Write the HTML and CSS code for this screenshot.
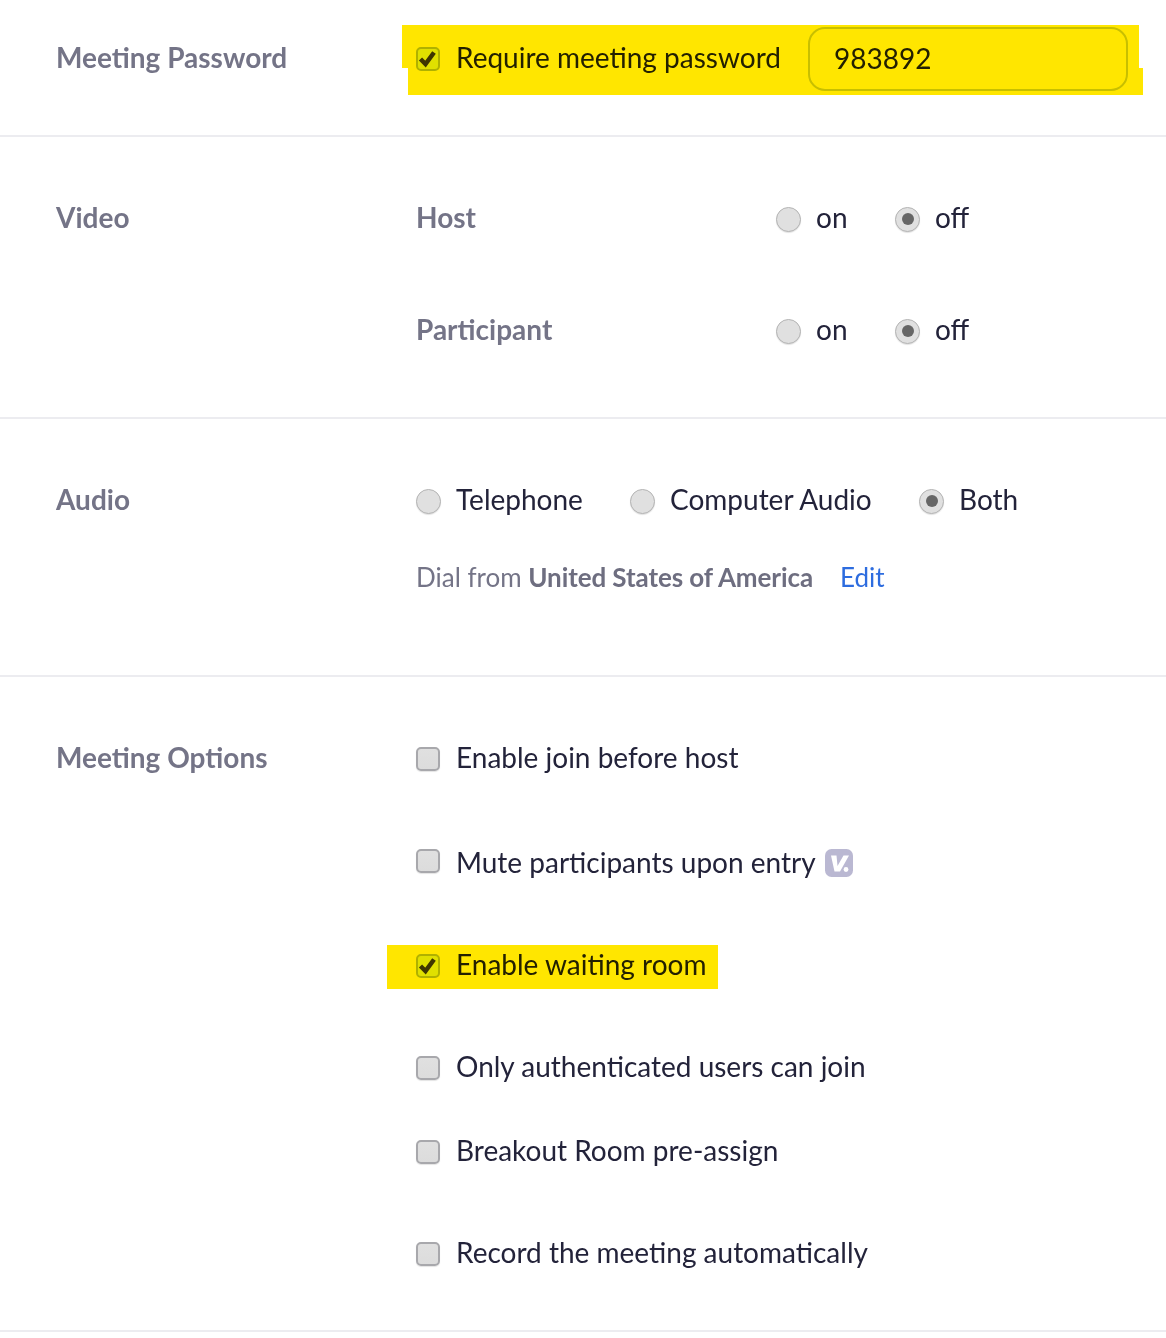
FILE: index.html
```html
<!DOCTYPE html>
<html lang="en">
<head>
<meta charset="utf-8">
<title>Meeting settings</title>
<link rel="stylesheet" href="styles.css">
</head>
<body>
<main class="page">
  <section class="section s-password">
    <h2 class="label">Meeting Password</h2>
    <div class="content">
      <div class="row">
        <span class="check on"><svg class="tick" viewBox="0 0 20 20"><path d="M2.500 10 7.500 15 16 3.500" /></svg></span>
        <span class="text">Require meeting password</span>
        <span class="input">983892</span>
      </div>
    </div>
  </section>
  <section class="section s-video">
    <h2 class="label">Video</h2>
    <div class="content">
      <div class="row">
        <span class="sub sub-fixed">Host</span>
        <span class="radio"></span><span class="text t-on">on</span>
        <span class="radio selected"></span><span class="text">off</span>
      </div>
      <div class="row mt-72">
        <span class="sub sub-fixed">Participant</span>
        <span class="radio"></span><span class="text t-on">on</span>
        <span class="radio selected"></span><span class="text">off</span>
      </div>
    </div>
  </section>
  <section class="section s-audio">
    <h2 class="label">Audio</h2>
    <div class="content">
      <div class="row">
        <span class="radio"></span><span class="text t-tel">Telephone</span>
        <span class="radio"></span><span class="text t-comp">Computer Audio</span>
        <span class="radio selected"></span><span class="text">Both</span>
      </div>
      <div class="row mt-38 dial">
        <span>Dial from <b>United States of America</b></span>
        <a class="edit" href="#">Edit</a>
      </div>
    </div>
  </section>
  <section class="section s-options">
    <h2 class="label">Meeting Options</h2>
    <div class="content">
      <div class="row"><span class="check"></span><span class="text">Enable join before host</span></div>
      <div class="row mt-65">
        <span class="check raised"></span><span class="text">Mute participants upon entry</span>
        <svg class="badge" viewBox="0 0 28 28"><rect width="28" height="28" rx="6.5" fill="#bab8d2"/><path d="M6 6.500h5.500l1 10.500L18.500 6.500H24L15 22.500H9.500z" fill="#fff"/><circle cx="21" cy="20.500" r="2.400" fill="#fff"/></svg>
      </div>
      <div class="row mt-62">
        <span class="check on"><svg class="tick" viewBox="0 0 20 20"><path d="M2.500 10 7.500 15 16 3.500" /></svg></span>
        <span class="text">Enable waiting room</span>
      </div>
      <div class="row mt-62"><span class="check"></span><span class="text">Only authenticated users can join</span></div>
      <div class="row mt-44"><span class="check"></span><span class="text">Breakout Room pre-assign</span></div>
      <div class="row mt-62"><span class="check"></span><span class="text">Record the meeting automatically</span></div>
    </div>
  </section>
  <div class="mark mark-a"></div>
  <div class="mark mark-b"></div>
  <div class="mark mark-c"></div>
</main>
</body>
</html>
```

FILE: styles.css
```css
* { box-sizing: border-box; }
html, body { margin: 0; padding: 0; background: #fff; }
body {
  font-family: Lato, "Liberation Sans", sans-serif;
  font-size: 28px;
  color: #23233a;
}
.page { position: relative; width: 1166px; height: 1338px; overflow: hidden; }
.section {
  display: flex;
  padding-left: 56px;
  border-bottom: 2px solid #ececf0;
}
.s-password { height: 137px; padding-top: 38px; }
.s-video { height: 282px; padding-top: 61px; }
.s-audio { height: 258px; padding-top: 61px; }
.s-options { height: 655px; padding-top: 61px; }
.label {
  width: 361px;
  flex: none;
  margin: 0;
  font-size: 28px;
  font-weight: 700;
  line-height: 38px;
  color: #747487;
}
.content { flex: 1; display: flex; flex-direction: column; margin-left: -1px; }
.row { display: flex; align-items: center; height: 40px; }
.mt-38 { margin-top: 38px; }
.mt-44 { margin-top: 44px; }
.mt-62 { margin-top: 62px; }
.mt-65 { margin-top: 65px; }
.mt-72 { margin-top: 72px; }
.text { white-space: nowrap; padding-bottom: 2px; }
.sub { font-weight: 700; color: #747487; padding-bottom: 2px; }
.sub-fixed { width: 360px; flex: none; }
.check {
  flex: none;
  width: 24px;
  height: 24px;
  margin-top: 2px;
  margin-right: 16px;
  display: flex;
  align-items: center;
  justify-content: center;
  border: 2px solid #a8a8ac;
  border-radius: 5px;
  background: linear-gradient(#e0e0e0, #dcdcdc);
  box-shadow: 0 1px 1px #e4e4e4;
}
.on {
  border-color: #b0c4a0;
  background: #e0f9e0;
  box-shadow: none;
}
.raised { margin-top: -4px; }
.tick { width: 20px; height: 20px; fill: none; stroke: #3e3c20; stroke-width: 4.5; }
.radio {
  flex: none;
  width: 25px;
  height: 25px;
  margin-top: 2px;
  margin-right: 15px;
  display: flex;
  align-items: center;
  justify-content: center;
  border: 1px solid #b4b4b4;
  border-radius: 50%;
  background: #e0e0e0;
  box-shadow: 0 1px 1px #e2e2e2;
}
.selected::after {
  content: "";
  width: 12px;
  height: 12px;
  border-radius: 50%;
  background: #666;
}
.t-on { width: 79px; flex: none; }
.t-tel { width: 174px; flex: none; }
.t-comp { width: 249px; flex: none; }
.input {
  width: 320px;
  height: 64px;
  margin-top: 1px;
  margin-left: 27px;
  padding-left: 24px;
  line-height: 58px;
  border: 2px solid #c8d4c8;
  border-radius: 17px;
}
.dial { font-size: 26px; color: #747487; padding-bottom: 2px; }
.dial b { font-weight: 700; color: #6e6e80; letter-spacing: -0.09px; }
.edit { margin-left: 27px; color: #2d6cdf; text-decoration: none; }
.badge { width: 28px; height: 28px; margin-left: 9px; flex: none; }
.mark { position: absolute; background: #ffe600; mix-blend-mode: multiply; }
.mark-a { left: 402px; top: 25px; width: 737px; height: 43px; }
.mark-b { left: 408px; top: 52px; width: 735px; height: 43px; clip-path: polygon(0 37%, 100% 37%, 100% 100%, 0 100%); }
.mark-c { left: 387px; top: 945px; width: 331px; height: 44px; }
```
